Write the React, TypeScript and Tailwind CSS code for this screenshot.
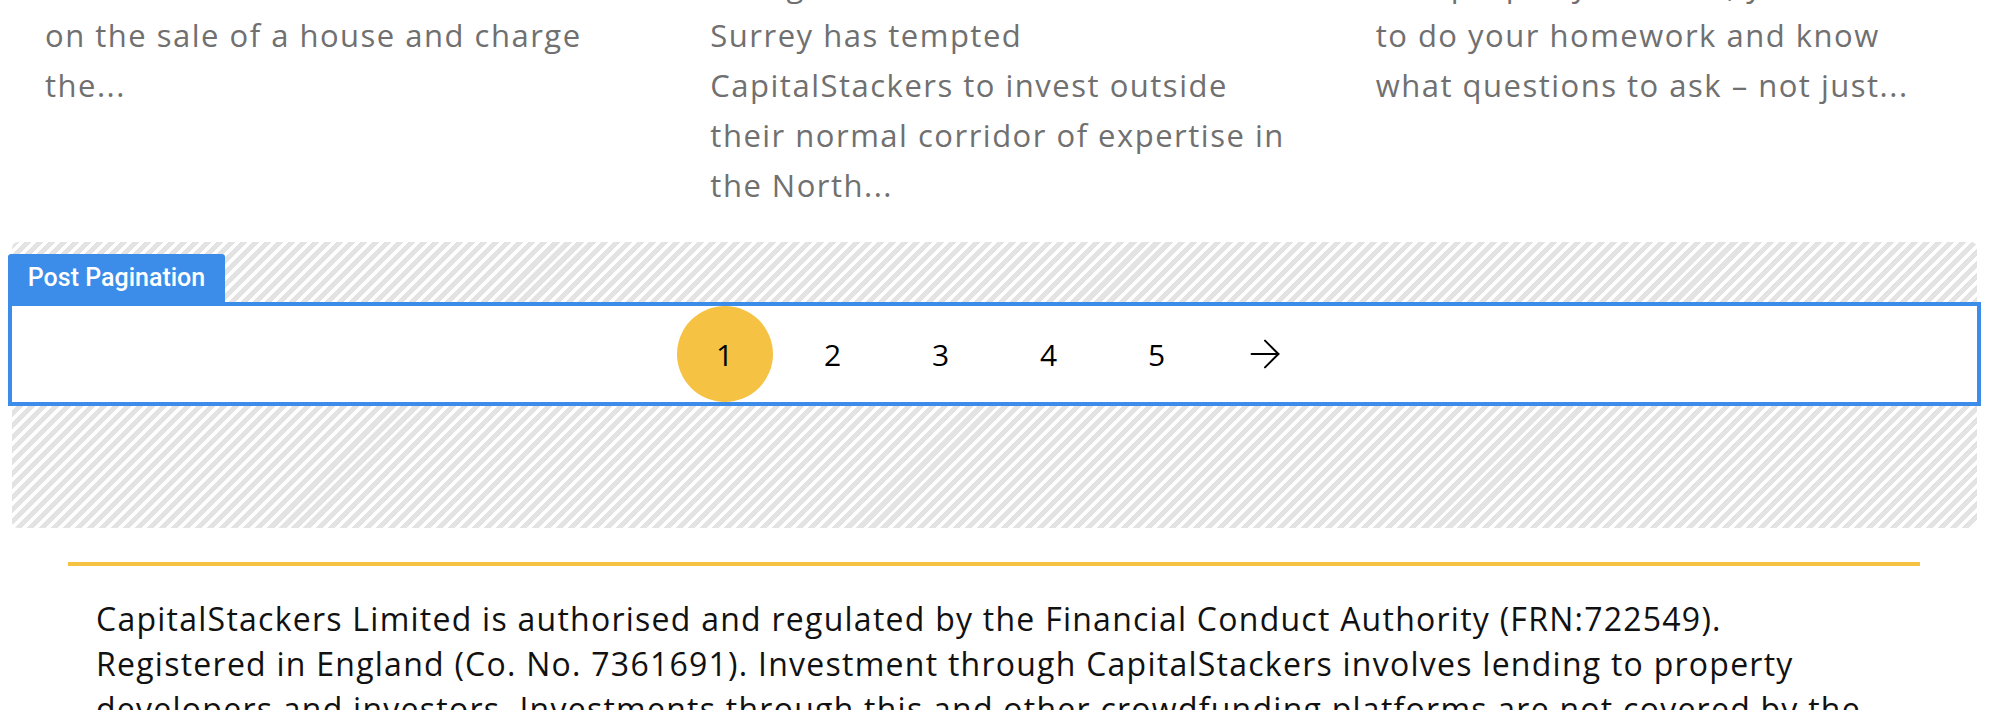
import { ArrowRight } from 'lucide-react'

const posts: string[][] = [
  ['Estate brokers take a commission', 'on the sale of a house and charge', 'the...'],
  [
    'Rising demand for new homes in',
    'Surrey has tempted',
    'CapitalStackers to invest outside',
    'their normal corridor of expertise in',
    'the North...',
  ],
  ['As a property investor, you need', 'to do your homework and know', 'what questions to ask – not just...'],
]

const disclaimer = [
  'CapitalStackers Limited is authorised and regulated by the Financial Conduct Authority (FRN:722549).',
  'Registered in England (Co. No. 7361691). Investment through CapitalStackers involves lending to property',
  'developers and investors. Investments through this and other crowdfunding platforms are not covered by the',
  'Financial Services Compensation Scheme (FSCS).',
]

const pages = [1, 2, 3, 4, 5]

export default function App() {
  return (
    <div className="h-[710px] w-[2000px] overflow-hidden bg-white font-['Open_Sans',sans-serif]">
      {/* post excerpts, scrolled so the first line is cut off */}
      <div className="-mt-[40px] grid w-[1996px] grid-cols-3 text-[31px] leading-[50px] tracking-[1.5px] text-[#707070]">
        {posts.map((lines, i) => (
          <p key={i} className="pl-[45px]">
            {lines.map((l, j) => (
              <span key={j} className="block whitespace-nowrap">
                {l}
              </span>
            ))}
          </p>
        ))}
      </div>

      {/* pagination widget, selected in the editor */}
      <div className="mt-[32px] ml-[12px] h-[286px] w-[1965px] rounded-md bg-[repeating-linear-gradient(135deg,#e3e3e3_0_5px,#ffffff_5px_8.5px)] pt-[64px]">
        <div className="relative flex h-[96px] items-center justify-center gap-[12px] bg-white outline-4 outline-solid outline-[#3c8dea]">
          <div className="absolute -top-[52px] -left-[4px] flex h-[48px] w-[217px] items-center justify-center rounded-t-[3px] bg-[#3c8dea] font-['Roboto',sans-serif] text-[25px] font-medium text-white">
            Post Pagination
          </div>
          {pages.map(n => (
            <span
              key={n}
              className={`flex h-[96px] w-[96px] items-center justify-center rounded-full text-[30px] text-black ${n === 1 ? 'bg-[#f6c244]' : ''}`}
            >
              {n}
            </span>
          ))}
          <span className="flex h-[96px] w-[96px] items-center justify-center text-black">
            <ArrowRight size={46} strokeWidth={2} absoluteStrokeWidth />
          </span>
        </div>
      </div>

      {/* footer */}
      <div className="mt-[34px] ml-[68px] w-[1852px] border-t-4 border-[#f6c244]">
        <p className="pt-[30px] pl-[28px] text-[32px] leading-[45px] tracking-[1.25px] text-[#111111]">
          {disclaimer.map((l, i) => (
            <span key={i} className="block whitespace-nowrap">
              {l}
            </span>
          ))}
        </p>
      </div>
    </div>
  )
}
